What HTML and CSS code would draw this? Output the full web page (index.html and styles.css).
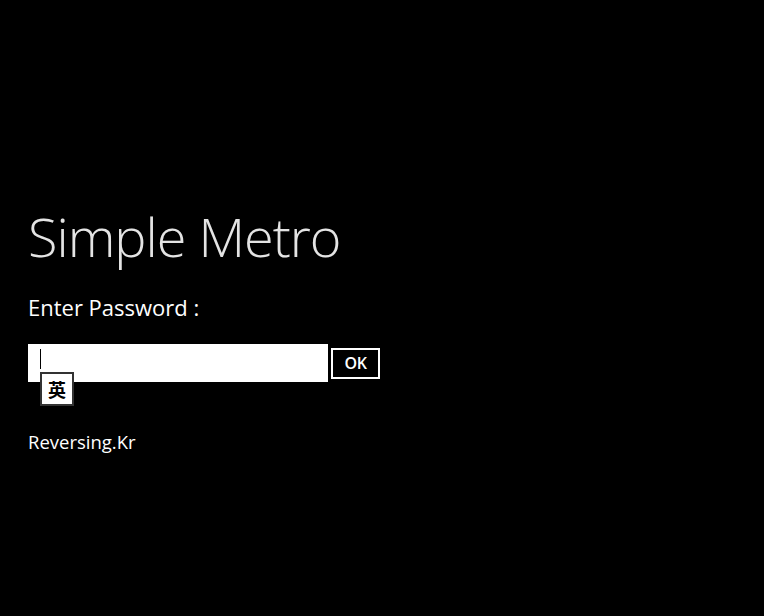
FILE: index.html
```html
<!DOCTYPE html>
<html lang="en">
  <head>
    <meta charset="UTF-8" />
    <meta name="viewport" content="width=device-width, initial-scale=1.0" />
    <link rel="stylesheet" href="styles.css">
    <title>Simple Metro</title>
  </head>
  <body>
    <div class="page">
      <h1 class="title">Simple Metro</h1>
      <label class="prompt" for="password">Enter Password :</label>
      <div class="entry">
        <div class="field">
          <span class="caret"></span>
          <span class="ime">英</span>
        </div>
        <button class="btn" id="ok">OK</button>
      </div>
      <p class="footer">Reversing.Kr</p>
    </div>
  </body>
</html>
```

FILE: styles.css
```css
html,
body {
  margin: 0;
  height: 100%;
  background-color: #000;
}

.page {
  padding: 206px 0 0 28px;
  font-family: "Open Sans", "Noto Sans CJK KR", sans-serif;
  color: #fff;
}

.title {
  margin: 0;
  font-size: 54px;
  font-weight: 300;
  line-height: 60px;
  color: #e4e4e4;
  letter-spacing: -1px;
}

.prompt {
  display: block;
  margin-top: 26px;
  font-size: 22px;
  line-height: 30px;
}

.entry {
  display: flex;
  align-items: center;
  gap: 3px;
  margin-top: 22px;
}

.field {
  position: relative;
  width: 300px;
  height: 38px;
  background-color: #fff;
}

.caret {
  position: absolute;
  left: 12px;
  top: 5px;
  width: 1px;
  height: 20px;
  background-color: #000;
}

/* IME mode indicator hanging under the caret */
.ime {
  position: absolute;
  left: 12px;
  top: 28px;
  width: 34px;
  height: 34px;
  box-sizing: border-box;
  border: 2px solid #333;
  background-color: #fff;
  color: #000;
  font-family: "Noto Sans CJK KR", sans-serif;
  font-size: 18px;
  font-weight: bold;
  line-height: 30px;
  text-align: center;
}

.btn {
  width: 49px;
  height: 31px;
  padding: 0;
  border: 2px solid #fff;
  background-color: #000;
  color: #fff;
  font-family: "Open Sans", sans-serif;
  font-size: 16px;
  font-weight: 600;
  letter-spacing: -0.5px;
}

.footer {
  margin: 47px 0 0;
  font-size: 18.5px;
  line-height: 26px;
}
```
